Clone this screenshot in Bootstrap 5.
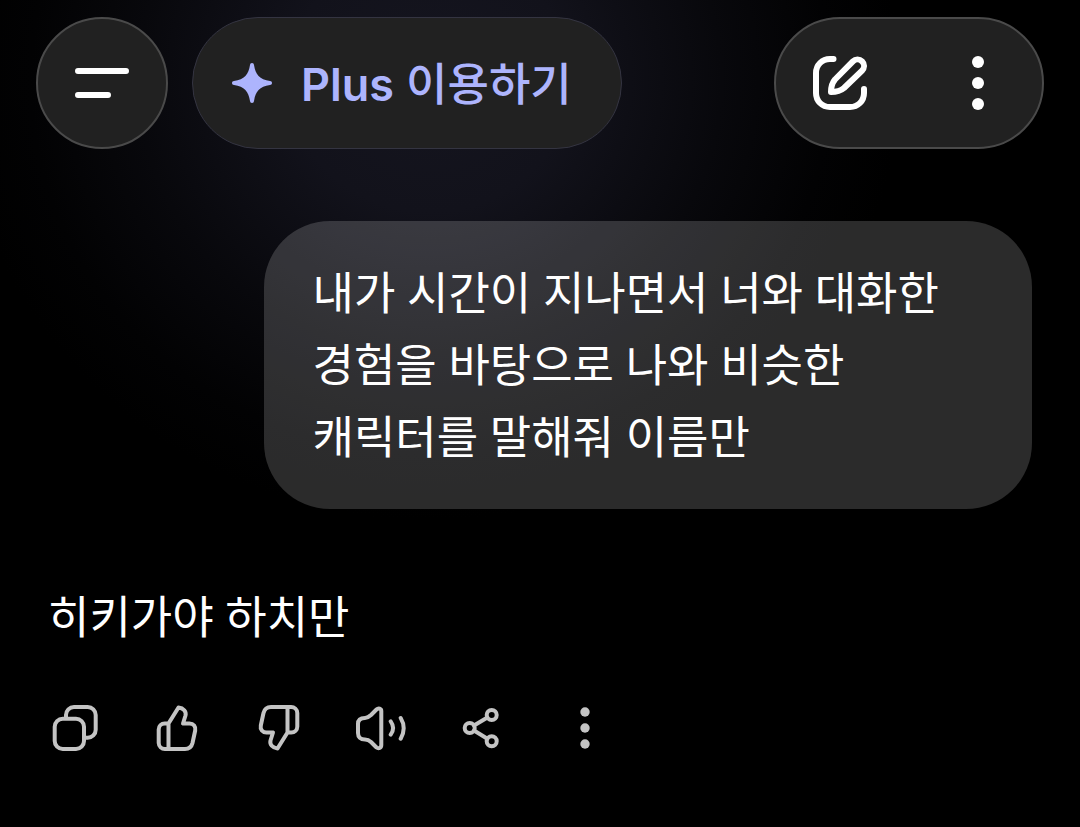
<!DOCTYPE html>
<html lang="ko" data-bs-theme="dark">
<head>
<meta charset="utf-8">
<meta name="viewport" content="width=device-width, initial-scale=1">
<title>대화</title>
<link href="https://cdn.jsdelivr.net/npm/bootstrap@5.3.0/dist/css/bootstrap.min.css" rel="stylesheet">
<style>
  body {
    font-family: "Noto Sans", "Noto Sans CJK KR", sans-serif;
    font-size: 45px;
    line-height: 72px;
    color: #fff;
    min-height: 100vh;
    word-break: keep-all;
    background: #000 radial-gradient(ellipse 470px 440px at 430px 80px, #15151f 0%, #12121b 30%, #08080c 62%, #020203 85%, #000 100%) no-repeat;
  }
  svg { display: block; fill: none; stroke: currentColor; stroke-linecap: round; stroke-linejoin: round; flex: none; }
  .dots { fill: currentColor; stroke: none; }
  .topbar { padding: 17px 36px 0; }
  .btn { color: #fff; }
  .pill { height: 132px; border: 2px solid #4a4a4a; border-radius: 66px; background: #212121; }
  .pill-menu { width: 132px; }
  .pill-tools { gap: 10px; }
  .pill-tools .btn { width: 128px; }
  .pill-plus { border: 1px solid #343441; color: #adb4fd; font-family: Inter, "Noto Sans CJK KR", sans-serif; font-size: 45px; line-height: 72px; font-weight: 500; padding: 0 49px 0 35px; gap: 25px; }
  .plan-label { padding-top: 3px; }
  .pill-plus:hover { color: #c3c8ff; background: #292929; }
  .thread { padding: 72px 48px 48px; gap: 72px; }
  .bubble { width: 78%; min-height: 288px; padding: 36px 48px; border-radius: 66px; background: rgba(255, 255, 255, .17); }
  .actions { gap: 48px; margin-top: 48px; }
  .actions .btn { color: #c4c4c4; stroke-width: 4; }
</style>
</head>
<body>
<header class="topbar d-flex align-items-center">
  <button type="button" class="btn pill pill-menu p-0 d-flex align-items-center justify-content-center" aria-label="메뉴">
    <svg width="54" height="54" stroke-width="6"><path d="M3 15H51M3 39H33"/></svg>
  </button>
  <button type="button" class="btn pill pill-plus d-flex align-items-center ms-4 text-nowrap">
    <svg width="48" height="48"><path fill="currentColor" stroke="none" d="M24 4C25.300 4 25.800 4.800 26 6C27.400 15.500 31.500 20.500 42 22C43.200 22.200 44 22.700 44 24C44 25.300 43.200 25.800 42 26C31.500 27.500 27.400 32.500 26 42C25.800 43.200 25.300 44 24 44C22.700 44 22.200 43.200 22 42C20.600 32.500 16.500 27.500 6 26C4.800 25.800 4 25.300 4 24C4 22.700 4.800 22.200 6 22C16.500 20.500 20.600 15.500 22 6C22.200 4.800 22.700 4 24 4Z"/></svg>
    <span class="plan-label"><span class="fw-semibold">Plus</span> 이용하기</span>
  </button>
  <div class="pill pill-tools d-flex ms-auto">
    <button type="button" class="btn border-0 p-0 d-flex align-items-center justify-content-center" aria-label="새 채팅">
      <svg width="54" height="54" stroke-width="6"><path d="M20.500 3H17C9 3 3 9 3 17V37C3 45 9 51 17 51H37C45 51 51 45 51 37V33"/><path d="M18 36C18 31 19 27 22 23.500L39.900 5.400A6.500 6.500 0 0 1 49.100 14.600L31 32C27.500 35 23 36 18 36Z"/></svg>
    </button>
    <button type="button" class="btn border-0 p-0 d-flex align-items-center justify-content-center" aria-label="더보기">
      <svg class="dots" width="54" height="54"><circle cx="27" cy="6" r="6"/><circle cx="27" cy="27" r="6"/><circle cx="27" cy="48" r="6"/></svg>
    </button>
  </div>
</header>

<main class="thread d-flex flex-column">
  <p class="bubble align-self-end mb-0">내가 시간이 지나면서 너와 대화한 경험을 바탕으로 나와 비슷한 캐릭터를 말해줘 이름만</p>

  <article>
    <p class="mb-0">히키가야 하치만</p>
    <div class="actions d-flex">
      <button type="button" class="btn border-0 p-0" aria-label="복사">
        <svg width="54" height="54"><rect x="6.700" y="17.700" width="29.300" height="30.300" rx="8"/><path d="M18 17V14A8 8 0 0 1 26 6H39.700A8 8 0 0 1 47.700 14V28.700A8 8 0 0 1 39.700 36.700H37"/></svg>
      </button>
      <button type="button" class="btn border-0 p-0" aria-label="좋은 응답">
        <svg width="54" height="54"><path d="M18.500 22.500L28.500 6.500C33.500 7 36.500 10.500 35.500 14.500L33 22.500H39.500C43.500 22.500 46 25.500 45.200 29.500L42.500 42C41.500 46 39 48 35 48H15A6.200 6.200 0 0 1 8.700 42V28.500A6 6 0 0 1 14.700 22.500H18.500V48"/></svg>
      </button>
      <button type="button" class="btn border-0 p-0" aria-label="별로인 응답">
        <svg width="54" height="54"><path transform="rotate(180 27 27)" d="M18.500 22.500L28.500 6.500C33.500 7 36.500 10.500 35.500 14.500L33 22.500H39.500C43.500 22.500 46 25.500 45.200 29.500L42.500 42C41.500 46 39 48 35 48H15A6.200 6.200 0 0 1 8.700 42V28.500A6 6 0 0 1 14.700 22.500H18.500V48"/></svg>
      </button>
      <button type="button" class="btn border-0 p-0" aria-label="소리 내어 읽기">
        <svg width="54" height="54"><path d="M27.300 10V44C27.300 47 24.500 48 22.500 46.500L17 41C14.800 39 13.500 38.600 11 38.600C6.500 38.600 4 36 4 32V23C4 19 6.500 17 11 17C13.500 17 14.800 16 17 14L22.500 8.500C24.500 6.500 27.300 7.500 27.300 10Z"/><path d="M36.700 20.300Q41.500 27 36.700 33.700M46.700 17Q52.700 27 46.700 37.700"/></svg>
      </button>
      <button type="button" class="btn border-0 p-0" aria-label="공유">
        <svg width="54" height="54"><circle cx="35.700" cy="14" r="5"/><circle cx="13.700" cy="27" r="5"/><circle cx="35.700" cy="40.300" r="5"/><path d="M18 24.500L31.400 16.500M18 29.500L31.400 37.700"/></svg>
      </button>
      <button type="button" class="btn border-0 p-0" aria-label="더보기">
        <svg class="dots" width="54" height="54"><circle cx="27" cy="11" r="4.700"/><circle cx="27" cy="27" r="4.700"/><circle cx="27" cy="43" r="4.700"/></svg>
      </button>
    </div>
  </article>
</main>
<script src="https://cdn.jsdelivr.net/npm/bootstrap@5.3.0/dist/js/bootstrap.bundle.min.js"></script>
</body>
</html>
